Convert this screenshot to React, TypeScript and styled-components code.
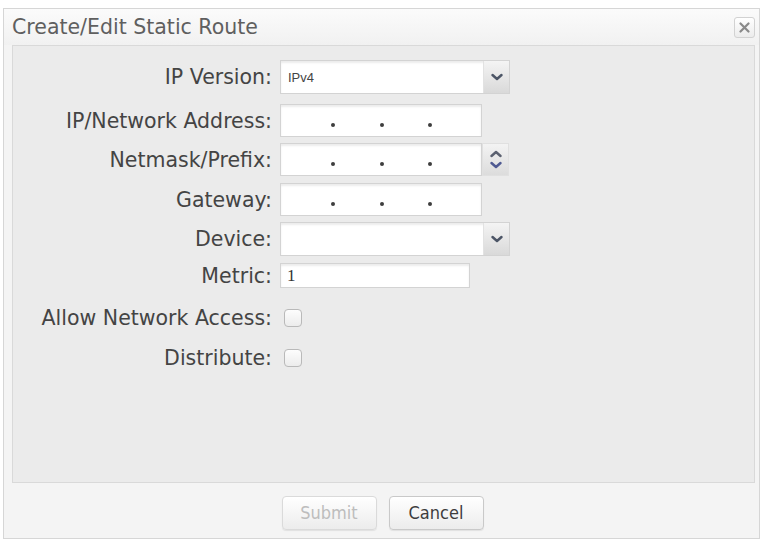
import styled, { createGlobalStyle } from "styled-components";

const GlobalStyle = createGlobalStyle`
  html, body {
    margin: 0;
    padding: 0;
    background: #ffffff;
  }
  * {
    box-sizing: border-box;
  }
`;

const font = `"DejaVu Sans", Verdana, sans-serif`;

export default function App() {
  return (
    <>
      <GlobalStyle />
      <Dialog>
        <TitleBar>
          <Title>Create/Edit Static Route</Title>
          <CloseButton aria-label="Close">
            <svg width="11" height="11" viewBox="0 0 11 11">
              <path
                d="M1.5 1.5 L9.5 9.5 M9.5 1.5 L1.5 9.5"
                stroke="#8a8a8a"
                strokeWidth="2.2"
                strokeLinecap="round"
              />
            </svg>
          </CloseButton>
        </TitleBar>

        <Panel>
          <Row $h={34} $mt={0}>
            <Label>IP Version:</Label>
            <Select $w={230}>
              <SelectValue>IPv4</SelectValue>
              <ArrowBox>
                <Chevron dir="down" color="#4c5566" />
              </ArrowBox>
            </Select>
          </Row>

          <Row $h={33} $mt={10}>
            <Label>IP/Network Address:</Label>
            <IpField />
          </Row>

          <Row $h={33} $mt={6}>
            <Label>Netmask/Prefix:</Label>
            <IpField />
            <Spinner>
              <Chevron dir="up" color="#5b6170" />
              <Chevron dir="down" color="#4f5a92" />
            </Spinner>
          </Row>

          <Row $h={33} $mt={7}>
            <Label>Gateway:</Label>
            <IpField />
          </Row>

          <Row $h={34} $mt={6}>
            <Label>Device:</Label>
            <Select $w={230}>
              <SelectValue />
              <ArrowBox>
                <Chevron dir="down" color="#4c5566" />
              </ArrowBox>
            </Select>
          </Row>

          <Row $h={25} $mt={7}>
            <Label>Metric:</Label>
            <TextInput>1</TextInput>
          </Row>

          <Row $h={26} $mt={17}>
            <Label>Allow Network Access:</Label>
            <CheckBox />
          </Row>

          <Row $h={26} $mt={14}>
            <Label>Distribute:</Label>
            <CheckBox />
          </Row>
        </Panel>

        <Footer>
          <Button disabled>Submit</Button>
          <Button>Cancel</Button>
        </Footer>
      </Dialog>
    </>
  );
}

function IpField() {
  return (
    <Field $w={202}>
      <Dot />
      <Dot />
      <Dot />
    </Field>
  );
}

function Chevron({ dir, color }: { dir: "up" | "down"; color: string }) {
  const d = dir === "down" ? "M1.5 2 L6 6 L10.5 2" : "M1.5 6 L6 2 L10.5 6";
  return (
    <svg width="12" height="8" viewBox="0 0 12 8">
      <path
        d={d}
        fill="none"
        stroke={color}
        strokeWidth="2.4"
        strokeLinecap="round"
        strokeLinejoin="round"
      />
    </svg>
  );
}

const Dialog = styled.div`
  margin: 8px 7px 4px 3px;
  height: 531px;
  border: 1px solid #d6d6d6;
  background: #f4f4f4;
  display: flex;
  flex-direction: column;
  font-family: ${font};
`;

const TitleBar = styled.div`
  height: 36px;
  display: flex;
  align-items: center;
  justify-content: space-between;
  padding: 0 4px 0 8px;
  background: linear-gradient(#fbfbfb, #f1f1f1);
`;

const Title = styled.div`
  font-size: 20.5px;
  color: #5f5f5f;
`;

const CloseButton = styled.div`
  width: 21px;
  height: 21px;
  border: 1px solid #d2d2d2;
  border-radius: 3px;
  background: linear-gradient(#ffffff, #ececec);
  display: flex;
  align-items: center;
  justify-content: center;
`;

const Panel = styled.div`
  flex: 1;
  margin: 0 4px 0 8px;
  border: 1px solid #d9d9d9;
  background: #ebebeb;
  padding-top: 14px;
  display: flex;
  flex-direction: column;
`;

const Row = styled.div<{ $h: number; $mt: number }>`
  height: ${(p) => p.$h}px;
  margin-top: ${(p) => p.$mt}px;
  display: grid;
  grid-template-columns: 259px auto auto;
  justify-content: start;
  align-items: center;
  column-gap: 8px;
`;

const Label = styled.div`
  text-align: right;
  font-size: 20.5px;
  color: #444444;
  white-space: nowrap;
`;

const fieldBase = `
  background: #ffffff;
  border: 1px solid #d3d3d3;
  box-shadow: inset 0 2px 2px rgba(0, 0, 0, 0.08);
`;

const Field = styled.div<{ $w: number }>`
  ${fieldBase}
  width: ${(p) => p.$w}px;
  height: 100%;
  display: flex;
  align-items: flex-end;
  justify-content: space-between;
  padding: 0 49px 9px 50px;
`;

const Dot = styled.span`
  width: 4px;
  height: 4px;
  border-radius: 50%;
  background: #3e3e3e;
`;

const Select = styled.div<{ $w: number }>`
  ${fieldBase}
  width: ${(p) => p.$w}px;
  height: 100%;
  display: flex;
  align-items: stretch;
`;

const SelectValue = styled.div`
  flex: 1;
  display: flex;
  align-items: center;
  padding-left: 7px;
  font-family: "Liberation Sans", Arial, sans-serif;
  font-size: 13px;
  color: #444;
`;

const ArrowBox = styled.div`
  width: 26px;
  display: flex;
  align-items: center;
  justify-content: center;
  background: linear-gradient(#f4f4f4, #d9d9d9);
  border-left: 1px solid #e2e2e2;
`;

const Spinner = styled.div`
  width: 27px;
  height: 100%;
  margin-left: -8px;
  display: flex;
  flex-direction: column;
  align-items: center;
  justify-content: center;
  gap: 3px;
  background: linear-gradient(#f3f3f3, #dcdcdc);
  border: 1px solid #e0e0e0;
`;

const TextInput = styled.div`
  ${fieldBase}
  width: 190px;
  height: 100%;
  display: flex;
  align-items: center;
  padding-left: 6px;
  font-family: "Liberation Serif", "Times New Roman", serif;
  font-size: 17px;
  color: #333;
`;

const CheckBox = styled.div`
  width: 18px;
  height: 18px;
  margin-left: 4px;
  border: 1.5px solid #b9b9b9;
  border-radius: 4px;
  background: linear-gradient(#fdfdfd, #ececec);
`;

const Footer = styled.div`
  height: 55px;
  display: flex;
  align-items: center;
  justify-content: center;
  gap: 12px;
  padding: 4px 0 0 2px;
`;

const Button = styled.button`
  width: 95px;
  height: 34px;
  border: 1px solid #c9c9c9;
  border-radius: 4px;
  background: linear-gradient(#ffffff, #ececec);
  box-shadow: 0 1px 1px rgba(0, 0, 0, 0.08);
  font-family: "DejaVu Sans Condensed", "DejaVu Sans", sans-serif;
  font-size: 18px;
  color: #3d3d3d;

  &:disabled {
    color: #bdbdbd;
    border-color: #dadada;
  }
`;
